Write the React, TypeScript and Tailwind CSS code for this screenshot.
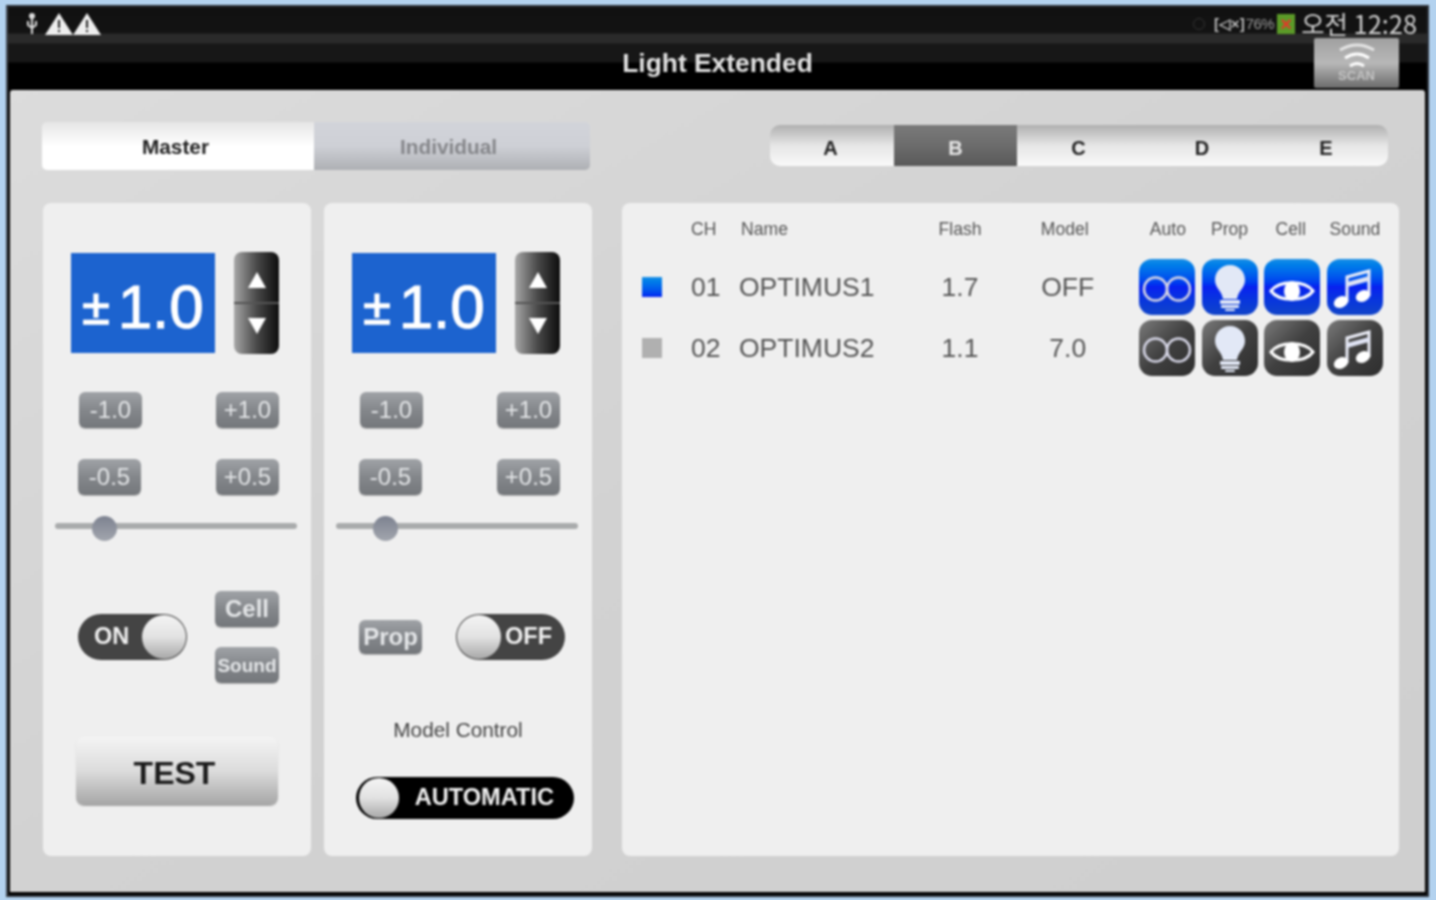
const buttonClass =
  "flex h-[36px] w-[63px] items-center justify-center rounded-[6px] bg-gradient-to-b from-[#a0a3a7] via-[#84878b] to-[#74777b] text-[24px] leading-none text-[#e4e6e8] shadow-[0_1px_1px_rgba(0,0,0,0.25)]";

const thumbClass =
  "rounded-full bg-gradient-to-b from-[#f4f4f4] via-[#e2e2e2] to-[#a8a8a8]";

const tableCols = "grid-cols-[49px_48px_179px_84px_133.5px_62.7px_62.7px_62.7px_62.7px]";

const channels = [
  { ch: "01", name: "OPTIMUS1", flash: "1.7", model: "OFF", active: true },
  { ch: "02", name: "OPTIMUS2", flash: "1.1", model: "7.0", active: false },
];

const tabs = [
  { label: "A", width: "w-[124px]" },
  { label: "B", width: "w-[123px]" },
  { label: "C", width: "w-[123px]" },
  { label: "D", width: "w-[124px]" },
  { label: "E", width: "w-[124px]" },
];

const Triangle = ({ up }: { up?: boolean }) => (
  <svg width="20" height="20" viewBox="0 0 20 20" className="fill-white">
    <path d={up ? "M10 2 L19 18 L1 18 Z" : "M1 2 L19 2 L10 18 Z"} />
  </svg>
);

const Display = () => (
  <>
    <div className="flex h-[100px] w-[144px] shrink-0 items-center justify-center gap-[8px] bg-[#1c63cf] pt-[8px] text-white [-webkit-text-stroke:1px_white]">
      <span className="text-[50px] leading-none [-webkit-text-stroke:1.5px_white]">±</span>
      <span className="text-[62px] leading-none">1.0</span>
    </div>
    <div className="ml-[19px] flex h-[102px] w-[45px] shrink-0 -translate-y-px flex-col items-center justify-between rounded-[8px] bg-gradient-to-r from-[#a8a8a8] via-[#4a4a4a] to-[#0e0e0e] py-[18px]">
      <Triangle up />
      <div className="h-[2px] w-full bg-[#555]" />
      <Triangle />
    </div>
  </>
);

const Slider = () => (
  <div className="relative mt-[20px] ml-[12px] flex h-[26px] w-[242px] items-center">
    <div className="h-[6px] w-full -translate-y-[2px] rounded-full bg-[#a9abac]" />
    <div className="absolute top-px left-[37px] h-[25px] w-[25px] rounded-full bg-gradient-to-b from-[#7d8290] to-[#a2a6ae]" />
  </div>
);

const StepButtons = () => (
  <>
    <div className="mt-[37px] flex justify-between pr-[32px] pl-[36px]">
      <div className={buttonClass}>-1.0</div>
      <div className={buttonClass}>+1.0</div>
    </div>
    <div className="mt-[31px] flex justify-between pr-[32px] pl-[35px]">
      <div className={buttonClass}>-0.5</div>
      <div className={buttonClass}>+0.5</div>
    </div>
  </>
);

const Tile = ({
  active,
  children,
}: {
  active: boolean;
  children: React.ReactNode;
}) => (
  <div className="flex justify-center">
    <div
      className={`h-[56px] w-[56px] rounded-[13px] ${
        active
          ? "bg-gradient-to-b from-[#1a8fe6] via-[#0a1ff0] to-[#1244c8]"
          : "bg-gradient-to-br from-[#7c7c7c] via-[#404040] to-[#2e2e2e]"
      }`}
    >
      {children}
    </div>
  </div>
);

const AutoIcon = () => (
  <svg viewBox="0 0 56 56" className="h-full w-full fill-none stroke-[#d4d4e4] stroke-[2.5]">
    <circle cx="16.5" cy="30" r="11.5" />
    <circle cx="39.5" cy="30" r="11.5" />
  </svg>
);

const BulbIcon = () => (
  <svg viewBox="0 0 56 56" className="h-full w-full fill-[#e2e8f6]">
    <path d="M28 6 C19 6 13 13 13 21 C13 29 20 32 21 40 L35 40 C36 32 43 29 43 21 C43 13 37 6 28 6 Z" />
    <rect x="18" y="41" width="20" height="4" rx="1" />
    <rect x="19" y="46" width="18" height="3" rx="1" />
    <rect x="23" y="50" width="10" height="2" rx="1" />
  </svg>
);

const EyeIcon = () => (
  <svg viewBox="0 0 56 56" className="h-full w-full">
    <path
      d="M7 32 C15 21 41 21 49 32 C41 43 15 43 7 32 Z"
      className="fill-none stroke-white stroke-[3]"
    />
    <ellipse cx="28" cy="32" rx="8" ry="10" className="fill-white" />
  </svg>
);

const MusicIcon = () => (
  <svg viewBox="0 0 56 56" className="h-full w-full">
    <path
      d="M20 43 L20 18 L42 12 L42 37"
      className="fill-none stroke-[#eceef8] stroke-[3]"
    />
    <path d="M20 23 L42 17 L42 22 L20 28 Z" className="fill-[#dfe3f4]" />
    <ellipse cx="14" cy="43" rx="7.5" ry="5.5" transform="rotate(-25 14 43)" className="fill-white" />
    <ellipse cx="36" cy="37" rx="7.5" ry="5.5" transform="rotate(-25 36 37)" className="fill-white" />
  </svg>
);

export default function App() {
  return (
    <div className="h-[900px] w-[1436px] overflow-hidden bg-[#b3d2ef] pt-[5px] pr-[7px] pb-[3px] pl-[6px] font-['Liberation_Sans',Arial,sans-serif]">
      <div className="flex h-full flex-col border-2 border-[#2b2f36] border-l-[#40464f] bg-black blur-[0.9px]">
        {/* Status bar + title */}
        <div className="relative h-[83px] shrink-0 bg-[linear-gradient(to_bottom,#111_0,#131313_26px,#2a2a2a_27px,#2a2a2a_36px,#171717_37px,#171717_55px,#000_56px)]">
          <div className="flex h-[30px] items-center pt-[3px] pr-[10px] pl-[17px]">
            <svg width="14" height="24" viewBox="0 0 14 24" className="fill-none stroke-[#ddd] stroke-2">
              <path d="M7 4 V22 M3 9 V13 L7 16 L11 13 V9" />
              <circle cx="7" cy="4" r="2" className="fill-[#ddd]" />
            </svg>
            {[0, 1].map((i) => (
              <svg key={i} width="28" height="24" viewBox="0 0 28 24" className={i === 0 ? "ml-[6px]" : ""}>
                <path d="M14 1 L28 23 L0 23 Z" className="fill-[#eee]" />
                <path d="M13 8 H15 L15 16 H13 Z M13 18 H15 V20 H13 Z" className="fill-[#222]" />
              </svg>
            ))}
            <div className="ml-auto flex items-center">
              <div className="h-[12px] w-[12px] rounded-full border border-[#333]" />
              <span className="ml-[9px] text-[15px] leading-none font-bold text-[#bbb]">[◁×]</span>
              <span className="ml-[1px] text-[15px] leading-none tracking-[-0.5px] text-[#999]">76%</span>
              <div className="ml-[3px] flex h-[20px] w-[18px] items-center justify-center bg-[#5b9a28] text-[20px] leading-none font-bold text-[#e23a2a]">
                ×
              </div>
              <span className="ml-[6px] font-['Noto_Sans_CJK_KR','Liberation_Sans',sans-serif] text-[25.4px] leading-none text-[#d0d0d0]">
                오전 12:28
              </span>
            </div>
          </div>
          <div className="mt-[6px] text-center text-[26.4px] leading-[40px] font-bold text-[#e2e2e2]">
            Light Extended
          </div>
          <div className="absolute top-[31px] right-[28px] flex h-[50px] w-[85px] flex-col items-center rounded-[2px] bg-gradient-to-b from-[#a0a0a0] via-[#b8b8b8] to-[#6c6c6c] pt-[4px]">
            <svg width="42" height="30" viewBox="0 0 42 30" className="fill-none stroke-white stroke-[3]">
              <path d="M4 8 Q21 -2 38 8" className="opacity-70" />
              <path d="M9 16 Q21 8 33 16" />
              <path d="M14 24 Q21 19 28 24" />
            </svg>
            <span className="-mt-[3px] text-[13px] leading-none font-bold text-[#c4c4c4]">SCAN</span>
          </div>
        </div>

        {/* Content */}
        <div className="mx-[2px] mb-[3px] flex-1 rounded-t-[3px] bg-gradient-to-br from-[#dcdcdc] via-[#d2d2d2] to-[#cfcfcf] pt-[32px] pr-[37px] pl-[32px]">
          <div className="flex justify-between">
            <div className="flex h-[48px] w-[548px] shrink-0 overflow-hidden rounded-[5px] text-[20.8px] font-bold">
              <div className="flex w-[272px] items-center justify-center bg-gradient-to-b from-[#e6e6e6] via-[#ffffff] to-[#ffffff] pt-[2px] pr-[5px] text-[#222]">
                Master
              </div>
              <div className="flex flex-1 items-center justify-center bg-gradient-to-b from-[#d2d4da] via-[#ced0d6] to-[#aeb0b4] pt-[2px] pr-[7px] text-[#85868a]">
                Individual
              </div>
            </div>
            <div className="mt-[3px] flex h-[41px] w-[618px] shrink-0 overflow-hidden rounded-[10px] text-[20px] font-bold text-[#222]">
              {tabs.map((tab) => (
                <div
                  key={tab.label}
                  className={`flex ${tab.width} items-center justify-center pt-[4px] first:pr-[3px] ${
                    tab.label === "B"
                      ? "bg-gradient-to-b from-[#7a7a7a] via-[#6c6c6c] to-[#595959] text-[#e6e6e6]"
                      : "bg-gradient-to-b from-[#b0b0b0] via-[#e6e6e6] to-[#fafafa]"
                  }`}
                >
                  {tab.label}
                </div>
              ))}
            </div>
          </div>

          <div className="mt-[33px] ml-px flex h-[653px]">
            {/* Left panel */}
            <div className="w-[268px] shrink-0 rounded-[8px] bg-[#efefef] pt-[50px]">
              <div className="flex pl-[28px]">
                <Display />
              </div>
              <StepButtons />
              <Slider />
              <div className="mt-[50px] flex h-[92px] items-center justify-between pr-[32px] pl-[35px]">
                <div className="flex h-[46px] w-[109px] items-center justify-between rounded-full bg-[#444] pr-px pl-[16px] text-[23.5px] font-bold text-[#f0f0f0]">
                  ON
                  <div className={`h-[44px] w-[44px] ${thumbClass}`} />
                </div>
                <div className="flex flex-col gap-[20px]">
                  <div className={`${buttonClass} !w-[64px] font-bold`}>Cell</div>
                  <div className={`${buttonClass} !w-[64px] !text-[19px] font-bold`}>Sound</div>
                </div>
              </div>
              <div className="mt-[54px] ml-[33px] flex h-[68px] w-[202px] items-center justify-center rounded-[8px] bg-gradient-to-b from-[#f4f4f4] via-[#dcdcdc] to-[#a6a6a6] pt-[3px] pr-[5px] text-[32px] font-bold text-[#1c1c1c] shadow-[0_1px_1px_rgba(0,0,0,0.3)]">
                TEST
              </div>
            </div>

            {/* Middle panel */}
            <div className="ml-[13px] w-[268px] shrink-0 rounded-[8px] bg-[#efefef] pt-[50px]">
              <div className="flex pl-[28px]">
                <Display />
              </div>
              <StepButtons />
              <Slider />
              <div className="mt-[50px] flex h-[92px] items-center justify-between pr-[27px] pl-[35px]">
                <div className={`${buttonClass} !h-[34px] font-bold`}>Prop</div>
                <div className="flex h-[46px] w-[109px] items-center justify-between rounded-full bg-[#444] pr-[13px] pl-px text-[23.5px] font-bold text-[#f0f0f0]">
                  <div className={`h-[44px] w-[44px] ${thumbClass}`} />
                  OFF
                </div>
              </div>
              <div className="mt-[37px] text-center text-[20.8px] leading-[20px] text-[#444]">
                Model Control
              </div>
              <div className="mt-[37px] ml-[32px] flex h-[42px] w-[218px] items-center justify-between rounded-full bg-black pr-[20px] pl-[3px] text-[23.6px] font-bold text-[#f0f0f0]">
                <div className={`h-[40px] w-[40px] ${thumbClass}`} />
                AUTOMATIC
              </div>
            </div>

            {/* Channel table */}
            <div className="ml-[30px] w-[777px] shrink-0 rounded-[8px] bg-[#efefef] pt-[17px] pl-[20px]">
              <div className={`grid h-[20px] ${tableCols} items-center text-[17.6px] leading-none text-[#555]`}>
                <span />
                <span>CH</span>
                <span className="pl-[2px]">Name</span>
                <span className="text-center">Flash</span>
                <span className="pr-[8px] text-center">Model</span>
                <span className="pl-[2px] text-center">Auto</span>
                <span className="text-center">Prop</span>
                <span className="pr-[3px] text-center">Cell</span>
                <span className="text-center">Sound</span>
              </div>
              <div className="mt-[19px] flex flex-col gap-[5px]">
                {channels.map((c) => (
                  <div
                    key={c.ch}
                    className={`grid h-[56px] ${tableCols} items-center text-[26.5px] leading-none text-[#555]`}
                  >
                    <div
                      className={`h-[20px] w-[20px] ${
                        c.active ? "bg-gradient-to-b from-[#1a8fe6] to-[#0a1ff0]" : "bg-[#b0b0b0]"
                      }`}
                    />
                    <span>{c.ch}</span>
                    <span>{c.name}</span>
                    <span className="text-center">{c.flash}</span>
                    <span className="pr-[2px] text-center">{c.model}</span>
                    <Tile active={c.active}><AutoIcon /></Tile>
                    <Tile active={c.active}><BulbIcon /></Tile>
                    <Tile active={c.active}><EyeIcon /></Tile>
                    <Tile active={c.active}><MusicIcon /></Tile>
                  </div>
                ))}
              </div>
            </div>
          </div>
        </div>
      </div>
    </div>
  );
}
